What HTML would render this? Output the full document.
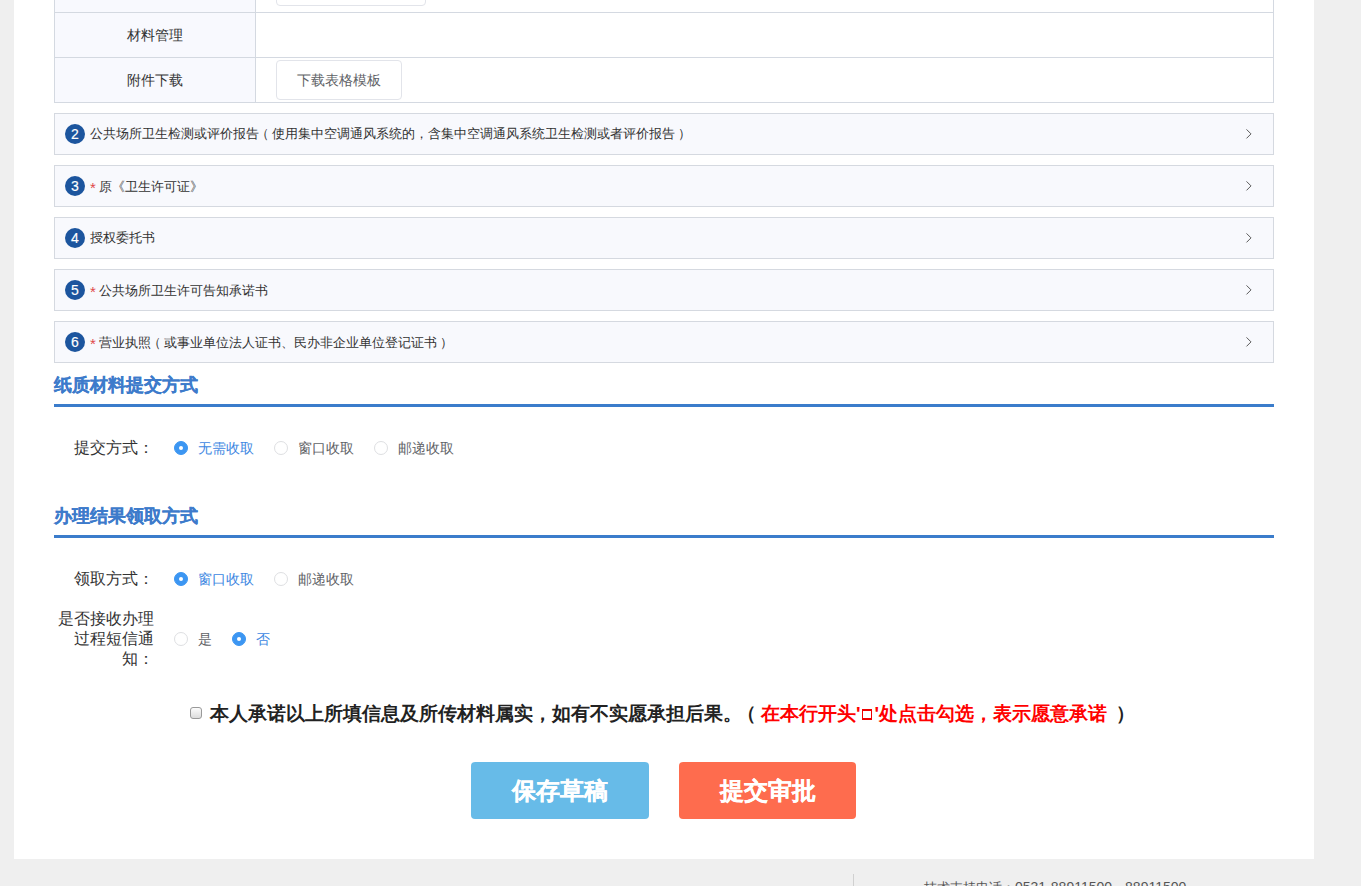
<!DOCTYPE html>
<html><head><meta charset="utf-8">
<style>
*{margin:0;padding:0;box-sizing:border-box;}
html,body{width:1361px;height:886px;overflow:hidden;background:#efefef;font-family:"Liberation Sans",sans-serif;}
.abs{position:absolute;}
#panel{position:absolute;left:14px;top:0;width:1300px;height:859px;background:#fff;}
/* table */
.tbl{position:absolute;left:54px;width:1220px;border-left:1px solid #d4d9e1;border-right:1px solid #d4d9e1;}
.row{position:absolute;left:54px;width:1220px;border:1px solid #d4d9e1;border-top:none;}
.row .lab{position:absolute;left:0;top:0;width:201px;height:100%;background:#f8f9fe;border-right:1px solid #d4d9e1;font-size:14px;color:#333;text-align:center;}
.elbtn{position:absolute;height:40px;border:1px solid #e2e4ea;border-radius:4px;background:#fff;color:#606266;font-size:14px;text-align:center;line-height:38px;}
/* accordion */
.acc{position:absolute;left:54px;width:1220px;height:42px;border:1px solid #d5d9e0;background:#f8f9fd;}
.acc .num{position:absolute;left:10px;top:10px;width:20px;height:20px;border-radius:50%;background:#1c559e;color:#fff;font-size:14px;line-height:20px;text-align:center;-webkit-text-stroke:0.15px #fff;}
.acc .txt{position:absolute;left:35px;top:0;line-height:40px;font-size:13px;color:#333;white-space:nowrap;}
.lp{position:relative;left:-3px;}.rp{position:relative;left:3px;}
.acc .star{color:#e04848;margin-right:3px;font-size:15px;position:relative;top:2px;}
.acc .chev{position:absolute;right:19px;top:15px;width:9px;height:10px;}
/* headings */
.h{position:absolute;left:54px;width:1220px;height:3px;background:#3b7ccb;}
.ht{position:absolute;left:54px;font-size:18px;font-weight:bold;color:#3d7bcb;white-space:nowrap;-webkit-text-stroke:0.2px #3d7bcb;}
.flab{position:absolute;left:54px;width:100px;text-align:right;font-size:16px;color:#333;line-height:20px;}
.radio{position:absolute;width:14px;height:14px;border-radius:50%;border:1px solid #dedfe2;background:#fff;}
.radio.on{background:#3c96f2;border-color:#3c96f2;}
.radio.on::after{content:"";position:absolute;left:50%;top:50%;transform:translate(-50%,-50%);width:4px;height:4px;border-radius:50%;background:#fff;}
.rl{position:absolute;font-size:14px;color:#606266;line-height:20px;white-space:nowrap;}
.rl.on{color:#3d87e2;}
.btn{position:absolute;top:762px;height:57px;border-radius:4px;color:#fff;font-size:24px;font-weight:bold;text-align:center;line-height:57px;-webkit-text-stroke:0.2px #fff;}
</style></head><body>
<div id="panel"></div>

<!-- table rows -->
<div class="row" style="top:-45px;height:58px;"><div class="lab"></div>
  <div class="elbtn" style="left:221px;top:11px;width:150px;height:40px;border-color:#e2e4ea;"></div>
</div>
<div class="row" style="top:12px;height:46px;border-top:1px solid #d4d9e1;"><div class="lab" style="line-height:44px;">材料管理</div></div>
<div class="row" style="top:57px;height:46px;border-top:1px solid #d4d9e1;"><div class="lab" style="line-height:44px;">附件下载</div>
  <div class="elbtn" style="left:221px;top:2px;width:126px;">下载表格模板</div>
</div>

<!-- accordion -->
<div class="acc" style="top:113px;"><div class="num">2</div><div class="txt">公共场所卫生检测或评价报告<span class="lp">（</span>使用集中空调通风系统的，含集中空调通风系统卫生检测或者评价报告<span class="rp">）</span></div><svg class="chev" viewBox="0 0 9 10"><path d="M1.5 0.4 L6 4.9 L1.5 9.4" fill="none" stroke="#5a5a5a" stroke-width="1"/></svg></div>
<div class="acc" style="top:165px;"><div class="num">3</div><div class="txt"><span class="star">*</span>原《卫生许可证》</div><svg class="chev" viewBox="0 0 9 10"><path d="M1.5 0.4 L6 4.9 L1.5 9.4" fill="none" stroke="#5a5a5a" stroke-width="1"/></svg></div>
<div class="acc" style="top:217px;"><div class="num">4</div><div class="txt">授权委托书</div><svg class="chev" viewBox="0 0 9 10"><path d="M1.5 0.4 L6 4.9 L1.5 9.4" fill="none" stroke="#5a5a5a" stroke-width="1"/></svg></div>
<div class="acc" style="top:269px;"><div class="num">5</div><div class="txt"><span class="star">*</span>公共场所卫生许可告知承诺书</div><svg class="chev" viewBox="0 0 9 10"><path d="M1.5 0.4 L6 4.9 L1.5 9.4" fill="none" stroke="#5a5a5a" stroke-width="1"/></svg></div>
<div class="acc" style="top:321px;"><div class="num">6</div><div class="txt"><span class="star">*</span>营业执照<span class="lp">（</span>或事业单位法人证书、民办非企业单位登记证书<span class="rp">）</span></div><svg class="chev" viewBox="0 0 9 10"><path d="M1.5 0.4 L6 4.9 L1.5 9.4" fill="none" stroke="#5a5a5a" stroke-width="1"/></svg></div>

<!-- section 1 -->
<div class="ht" style="top:373px;">纸质材料提交方式</div>
<div class="h" style="top:404px;"></div>
<div class="flab" style="top:438px;">提交方式：</div>
<div class="radio on" style="left:174px;top:441px;"></div><div class="rl on" style="left:198px;top:438px;">无需收取</div>
<div class="radio" style="left:274px;top:441px;"></div><div class="rl" style="left:298px;top:438px;">窗口收取</div>
<div class="radio" style="left:374px;top:441px;"></div><div class="rl" style="left:398px;top:438px;">邮递收取</div>

<!-- section 2 -->
<div class="ht" style="top:504px;">办理结果领取方式</div>
<div class="h" style="top:535px;"></div>
<div class="flab" style="top:569px;">领取方式：</div>
<div class="radio on" style="left:174px;top:572px;"></div><div class="rl on" style="left:198px;top:569px;">窗口收取</div>
<div class="radio" style="left:274px;top:572px;"></div><div class="rl" style="left:298px;top:569px;">邮递收取</div>

<div class="flab" style="top:609px;">是否接收办理过程短信通知：</div>
<div class="radio" style="left:174px;top:632px;"></div><div class="rl" style="left:198px;top:629px;">是</div>
<div class="radio on" style="left:232px;top:632px;"></div><div class="rl on" style="left:256px;top:629px;">否</div>

<!-- promise -->
<div class="abs" style="left:190px;top:702px;white-space:nowrap;font-size:19px;font-weight:bold;color:#222;line-height:24px;">
<span style="display:inline-block;width:12px;height:12px;border:1px solid #999;border-radius:3px;background:linear-gradient(#fcfcfc,#dcdcdc);vertical-align:1px;margin-right:8px;"></span>本人承诺以上所填信息及所传材料属实，如有不实愿承担后果。<span style="position:relative;left:-5px;">（</span><span style="color:#f00;">在本行开头'<span style="display:inline-block;width:10px;height:11px;border:1px solid #e00;border-top-width:2px;border-bottom-width:2px;margin:0 3px 0 1px;vertical-align:0px;"></span>'处点击勾选，表示愿意承诺</span> <span style="position:relative;left:4px;">）</span></div>

<div class="btn" style="left:471px;width:178px;background:#67bbe8;">保存草稿</div>
<div class="btn" style="left:679px;width:177px;background:#fe6c4e;">提交审批</div>

<!-- footer -->
<div class="abs" style="left:853px;top:874px;width:1px;height:20px;background:#d0d0d0;"></div>
<div class="abs" style="left:924px;top:879px;font-size:13px;color:#555;white-space:nowrap;">技术支持电话：<span style="font-size:14px;">0531-88911500</span>，<span style="font-size:14px;">88911500</span></div>
</body></html>
